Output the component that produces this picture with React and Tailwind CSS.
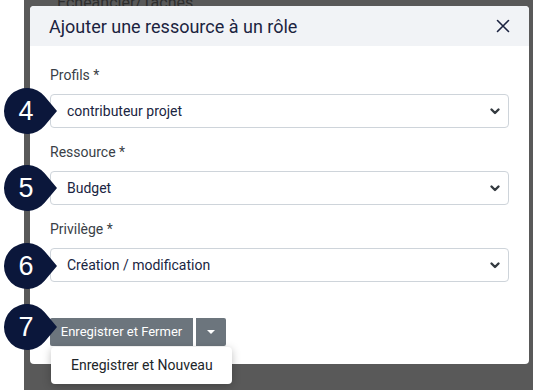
const App = () => {
  return (
    <div className="w-[533px] h-[390px] flex bg-white overflow-hidden font-['Roboto',sans-serif]">
      <div className="w-[24px] shrink-0 bg-white" />

      <div className="relative flex-1 bg-[#595959]">
        <div className="absolute left-[33px] top-[-9px] text-[16px] text-[#2e2e2e]">
          Echeancier/Taches
        </div>

        <div className="relative ml-[6px] mt-[6px] w-[499px] h-[358px] bg-white rounded-[4px] flex flex-col">
          <div className="h-[40px] bg-[#f1f3f6] rounded-t-[4px] flex items-center justify-between pl-[19px] pr-[19px]">
            <h1 className="text-[18px] text-[#1b2340]">Ajouter une ressource à un rôle</h1>
            <CloseIcon />
          </div>

          <div className="flex flex-col px-[20px] pt-[19px]">
            <Field label="Profils *" value="contributeur projet" />
            <Field label="Ressource *" value="Budget" />
            <Field label="Privilège *" value="Création / modification" />

            <div className="relative mt-[22px] flex gap-[3px]">
              <button
                type="button"
                className="h-[28px] w-[143px] bg-[#6c757d] text-white text-[13px] rounded-l-[2px]"
              >
                Enregistrer et Fermer
              </button>
              <button
                type="button"
                className="h-[28px] w-[30px] bg-[#6c757d] flex items-center justify-center rounded-r-[2px]"
              >
                <span className="w-0 h-0 border-l-[4px] border-r-[4px] border-t-[4px] border-l-transparent border-r-transparent border-t-white" />
              </button>

              <div className="absolute left-[1px] top-[29px] w-[181px] h-[37px] bg-white rounded-[4px] shadow-[0_2px_8px_rgba(0,0,0,0.25)] flex items-center pl-[20px] text-[14px] text-[#212529]">
                Enregistrer et Nouveau
              </div>
            </div>
          </div>
        </div>
      </div>

      <Badge n="4" top={87} />
      <Badge n="5" top={164} />
      <Badge n="6" top={242} />
      <Badge n="7" top={303} />
    </div>
  );
};

const Field = ({ label, value }) => {
  return (
    <div className="flex flex-col mb-[14px] last:mb-0">
      <label className="text-[14px] leading-[21px] text-[#3a3f47] mb-[8px]">{label}</label>
      <div className="h-[34px] border border-[#ced4da] rounded-[4px] flex items-center justify-between pl-[16px] pr-[7px] text-[14px] text-[#1a2542]">
        <span>{value}</span>
        <ChevronIcon />
      </div>
    </div>
  );
};

const Badge = ({ n, top }) => {
  return (
    <div className="absolute left-[2px] w-[56px] h-[48px]" style={{ top }}>
      <svg width="56" height="48" viewBox="0 0 56 48" className="absolute inset-0">
        <path d="M55 24 L42.6 9.2 A23 23 0 1 0 42.6 38.8 Z" fill="#0b173b" />
      </svg>
      <span className="absolute left-0 top-0 w-[48px] h-[48px] flex items-center justify-center text-white text-[27px] font-['Liberation_Sans',sans-serif]">
        {n}
      </span>
    </div>
  );
};

const CloseIcon = () => (
  <svg width="14" height="14" viewBox="0 0 14 14" fill="none">
    <path d="M1.5 1.5l11 11M12.5 1.5l-11 11" stroke="#1b2340" strokeWidth="1.6" strokeLinecap="round" />
  </svg>
);

const ChevronIcon = () => (
  <svg width="12" height="12" viewBox="0 0 12 12" fill="none">
    <path d="M2.5 4.5L6 8l3.5-3.5" stroke="#343a40" strokeWidth="2.4" strokeLinecap="round" strokeLinejoin="round" />
  </svg>
);

export default App;
